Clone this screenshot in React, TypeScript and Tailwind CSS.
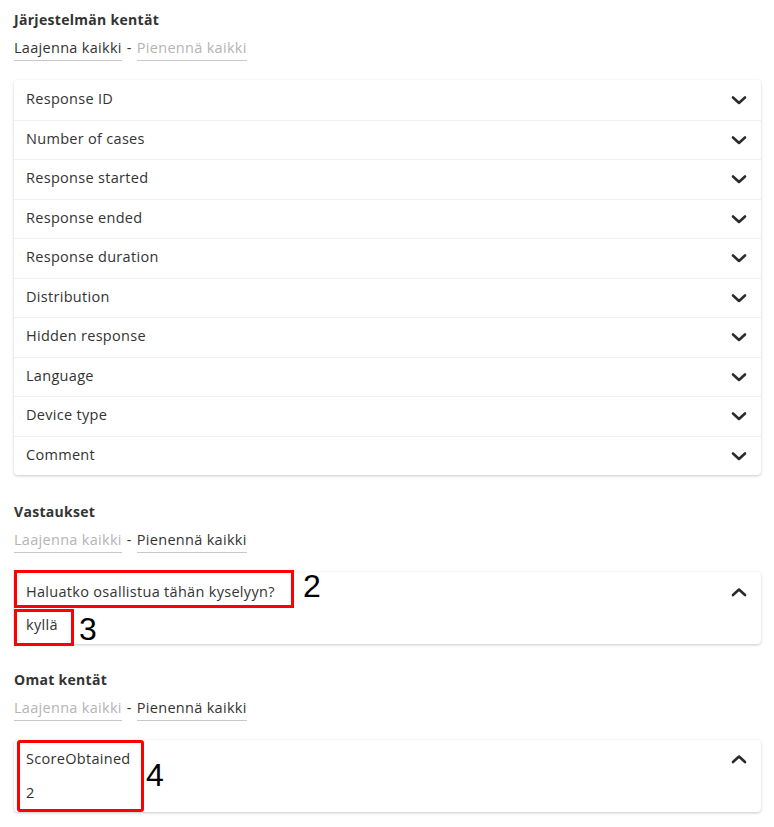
import React from "react";

const font = { fontFamily: '"Open Sans", "Noto Sans", Arial, sans-serif', letterSpacing: "0.3px" };

function Chevron({ up }: { up?: boolean }) {
  return (
    <svg width="16" height="10" viewBox="0 0 16 10" className="shrink-0">
      <path
        d={up ? "M2 8 L8 2.5 L14 8" : "M2 2.5 L8 8 L14 2.5"}
        fill="none"
        stroke="#2b2b2b"
        strokeWidth="2.6"
        strokeLinecap="round"
        strokeLinejoin="round"
      />
    </svg>
  );
}

function Toggles({ expandActive }: { expandActive: boolean }) {
  return (
    <div className="mt-[8px] flex h-[23px] items-start text-[14.5px] leading-[20px]">
      <span
        className={`border-b border-[#c8c8c8] pb-[2px] ${expandActive ? "text-[#333]" : "text-[#b4b4b4]"}`}
      >
        Laajenna kaikki
      </span>
      <span className="mx-[5px] text-[#333]">-</span>
      <span
        className={`border-b border-[#c8c8c8] pb-[2px] ${expandActive ? "text-[#b4b4b4]" : "text-[#333]"}`}
      >
        Pienennä kaikki
      </span>
    </div>
  );
}

function Heading({ children }: { children: React.ReactNode }) {
  return <div className="h-5 text-[14px] font-bold leading-5 text-[#333]">{children}</div>;
}

const systemFields = [
  "Response ID",
  "Number of cases",
  "Response started",
  "Response ended",
  "Response duration",
  "Distribution",
  "Hidden response",
  "Language",
  "Device type",
  "Comment",
];

function Mark({ n, className }: { n: string; className: string }) {
  return (
    <span
      className={`absolute text-[32px] leading-none tracking-normal text-black ${className}`}
      style={{ fontFamily: '"Liberation Sans", Arial, sans-serif' }}
    >
      {n}
    </span>
  );
}

export default function App() {
  return (
    <div className="min-h-[827px] bg-white pl-[14px] pr-[13px] pt-[10px]" style={font}>
      <Heading>Järjestelmän kentät</Heading>
      <Toggles expandActive />
      <div className="mt-[19px] overflow-hidden rounded-[4px] bg-white shadow-[0_1px_3px_rgba(0,0,0,0.22)]">
        {systemFields.map((f, i) => (
          <div
            key={f}
            className={`flex h-[39.5px] items-center justify-between pl-3 pr-[14px] text-[14.5px] text-[#333] ${i > 0 ? "border-t border-[#f0f0f0]" : ""}`}
          >
            <span className="-mt-[2px]">{f}</span>
            <Chevron />
          </div>
        ))}
      </div>

      <div className="mt-[27px]">
        <Heading>Vastaukset</Heading>
        <Toggles expandActive={false} />
        <div className="relative mt-[19px] h-[72px] rounded-[4px] bg-white shadow-[0_1px_3px_rgba(0,0,0,0.22)]">
          <div className="flex h-[40px] items-center justify-between pl-3 pr-[14px] text-[14.5px] text-[#333]">
            <span>Haluatko osallistua tähän kyselyyn?</span>
            <Chevron up />
          </div>
          <div className="pl-3 pt-[3px] text-[14.5px] leading-[20px] text-[#333]">kyllä</div>
          <div className="absolute left-0 top-[-2px] h-[38px] w-[280px] border-[3px] border-[#ff0000]" />
          <Mark n="2" className="left-[289px] top-[-2px]" />
          <div className="absolute left-0 top-[37px] h-[37px] w-[60px] border-[3px] border-[#ff0000]" />
          <Mark n="3" className="left-[65px] top-[41px]" />
        </div>
      </div>

      <div className="mt-[26px]">
        <Heading>Omat kentät</Heading>
        <Toggles expandActive={false} />
        <div className="relative mt-[19px] h-[72px] rounded-[4px] bg-white shadow-[0_1px_3px_rgba(0,0,0,0.22)]">
          <div className="flex h-[38px] items-center justify-between pl-3 pr-[14px] text-[14.5px] text-[#333]">
            <span>ScoreObtained</span>
            <Chevron up />
          </div>
          <div className="pl-3 pt-[5px] text-[14.5px] leading-[20px] text-[#333]">2</div>
          <div className="absolute left-[3px] top-0 h-[72px] w-[127px] rounded-[3px] border-[3px] border-[#ff0000]" />
          <Mark n="4" className="left-[132px] top-[19px]" />
        </div>
      </div>
    </div>
  );
}
